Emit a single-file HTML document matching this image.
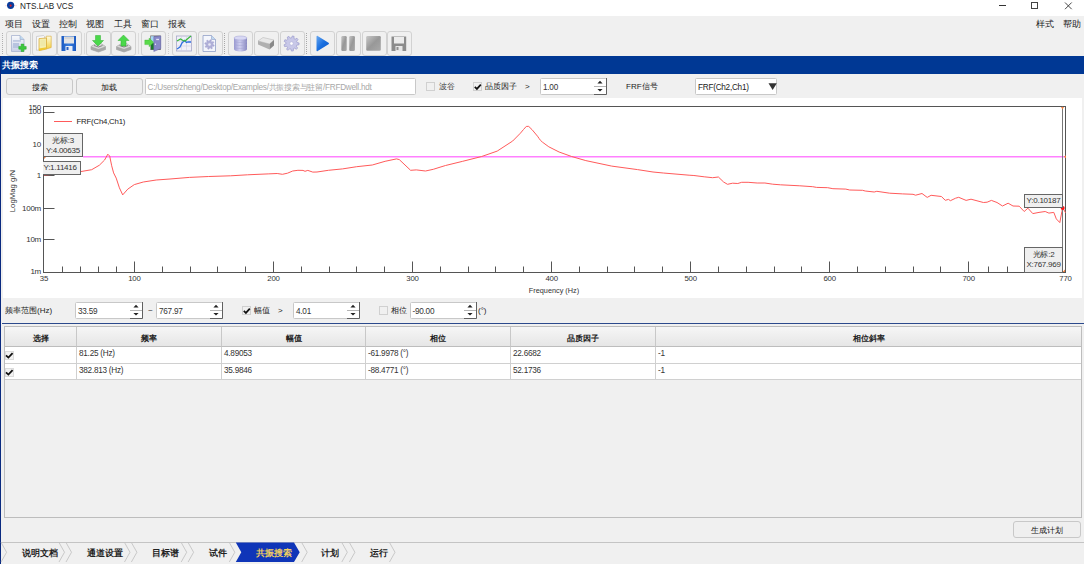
<!DOCTYPE html>
<html><head><meta charset="utf-8">
<style>
*{margin:0;padding:0;box-sizing:border-box}
html,body{width:1084px;height:564px;overflow:hidden;background:#f0f0f0;font-family:"Liberation Sans",sans-serif;color:#222}
.a{position:absolute}
#title{left:0;top:0;width:1084px;height:16px;background:#fff}
.menu{position:absolute;top:18px;font-size:8.5px;line-height:12px;color:#222}
.tb{position:absolute;top:31px;width:25px;height:25px;border:1px solid #d2d2d2;border-radius:3px;background:#f0f0f0}
.tb svg{position:absolute;left:-1px;top:-1px}
.tsep{position:absolute;top:33px;width:1px;height:21px;border-left:1px dotted #b8b8b8}
#bluebar{left:0;top:56px;width:1084px;height:17.5px;background:#003894;color:#fff;font-size:9px;font-weight:bold;line-height:19px;padding-left:1.5px}
#lborder{left:0;top:56px;width:1.2px;height:508px;background:#0a2a80}
.btn{position:absolute;height:16.5px;border:1px solid #c8c8c8;border-radius:3px;background:#efefef;font-size:8px;line-height:14px;padding-top:1.5px;text-align:center;color:#111}
.inp{position:absolute;height:16.5px;border:1px solid #c8c8c8;border-radius:1.5px;background:#fff;font-size:8.2px;letter-spacing:-0.25px;line-height:17px;padding-left:2px;color:#333;white-space:nowrap}
.chk{position:absolute;width:9px;height:9px;border:1px solid #d0d0d0;background:#f0f0f0}
.lbl{position:absolute;font-size:8px;line-height:12px;color:#222;white-space:nowrap}
.spin{position:absolute;right:0;top:0;width:12px;height:100%}
#chart{left:3px;top:98px;width:1079px;height:200px;background:#fff}
.xl{position:absolute;top:274px;width:40px;text-align:center;font-size:7.8px;letter-spacing:-0.2px;line-height:10px;color:#333}
.yl{position:absolute;left:0;width:41px;text-align:right;font-size:8px;letter-spacing:-0.25px;line-height:12px;color:#333}
.cbox{position:absolute;background:#efefef;border:1px solid #666;font-size:8px;letter-spacing:-0.25px;line-height:10px;text-align:center;color:#333;white-space:nowrap}
#table{left:4px;top:326px;width:1078px;height:192px;border:1px solid #bdbdbd;background:#f0f0f0}
.th{position:absolute;top:0;height:20px;background:linear-gradient(#f6f6f6,#e6e6e6);border-right:1px solid #c8c8c8;border-bottom:1px solid #bdbdbd;font-size:8.4px;font-weight:bold;line-height:22px;text-align:center;color:#222}
.td{position:absolute;height:17px;background:#fff;border-right:1px solid #d0d0d0;border-bottom:1px solid #d0d0d0;font-size:8.2px;letter-spacing:-0.25px;line-height:13px;padding-left:2px;color:#333;white-space:nowrap}
.tab{position:absolute;top:543.5px;height:19px;font-size:8.55px;font-weight:bold;line-height:19px;color:#222;white-space:nowrap}
</style></head><body>
<div id="title" class="a"></div>

<svg class="a" style="left:0;top:0" width="20" height="12"><line x1="5" y1="5.7" x2="17" y2="5.7" stroke="#ff8080" stroke-opacity=".25" stroke-width="1"/><circle cx="10.6" cy="5.3" r="3.6" fill="#0a3c9c"/><circle cx="10.6" cy="5.6" r="1.1" fill="#e02020"/></svg>
<div class="a" style="left:20px;top:1.8px;font-size:8.2px;line-height:10px;color:#222">NTS.LAB VCS</div>
<div class="a" style="left:999px;top:5px;width:7px;height:1px;background:#333"></div>
<div class="a" style="left:1031px;top:2px;width:7px;height:7px;border:1px solid #444"></div>
<svg class="a" style="left:1064px;top:2px" width="9" height="8"><path d="M1 0.5L7.7 7.2M7.7 0.5L1 7.2" stroke="#333" stroke-width="0.9"/></svg>

<div class="menu" style="left:5px">项目</div>
<div class="menu" style="left:32px">设置</div>
<div class="menu" style="left:59px">控制</div>
<div class="menu" style="left:86px">视图</div>
<div class="menu" style="left:114px">工具</div>
<div class="menu" style="left:141px">窗口</div>
<div class="menu" style="left:168px">报表</div>
<div class="menu" style="left:1036px">样式</div>
<div class="menu" style="left:1063px">帮助</div>

<div class="a" style="left:2px;top:33px;width:1px;height:21px;border-left:1px dotted #b0b0b0"></div>
<div class="tb" style="left:6px"><svg width="25" height="25"><defs><linearGradient id="gpg" x1="0" y1="0" x2="0" y2="1"><stop offset="0" stop-color="#f8f9fc"/><stop offset="1" stop-color="#c8d0e8"/></linearGradient></defs>
 <path d="M5.5 4.5h8.5l4 4v12h-12.5z" fill="url(#gpg)" stroke="#a8b4d0" stroke-width=".8"/><path d="M14 4.5v4h4" fill="#bcd8f0" stroke="#98a8c8" stroke-width=".6"/>
 <rect x="7" y="9.5" width="8" height=".9" fill="#98a8d0"/><rect x="7" y="12" width="6" height="5" fill="#b8c4e0"/>
 <path d="M15.15 13.100000000000001h2.7v2.35h2.35v2.7h-2.35v2.35h-2.7v-2.35h-2.35v-2.7h2.35z" fill="#3cc83c" stroke="#28a028" stroke-width=".5"/></svg></div>
<div class="tb" style="left:32px"><svg width="25" height="25"><defs><linearGradient id="gfo" x1="0" y1="0" x2="0" y2="1"><stop offset="0" stop-color="#fffce0"/><stop offset="1" stop-color="#f4d040"/></linearGradient></defs>
 <path d="M4.5 5.5l7-1 1 1v13l-8 .8z" fill="#f8f8f8" stroke="#b8b8c0" stroke-width=".6"/>
 <path d="M14.2 5.2h5v11.3l-5 1.5z" fill="url(#gfo)" stroke="#d8a830" stroke-width=".6"/>
 <path d="M7 7.6l7.5-.6v11l-7.5 1.6z" fill="#f4eeb0" stroke="#d8a830" stroke-width=".7"/><path d="M8.5 10h5M8.5 12h5M8.5 14h5" stroke="#e0d890" stroke-width=".5"/><path d="M7 17.5l7.5-1.2v1.8l-7.5 1.6z" fill="#f0c830"/></svg></div>
<div class="tb" style="left:57px"><svg width="25" height="25"><defs><linearGradient id="gfl" x1="0" y1="0" x2="1" y2="0"><stop offset="0" stop-color="#1a58c0"/><stop offset=".5" stop-color="#3a80e0"/><stop offset="1" stop-color="#1a58c0"/></linearGradient></defs>
 <path d="M4.5 5h14.5v15h-14.5z" rx="1" fill="url(#gfl)"/><rect x="7" y="5.5" width="10" height="7" fill="#e4e4e4"/><rect x="7.5" y="6.5" width="9" height="1" fill="#c8c8c8"/>
 <rect x="8.5" y="15" width="7" height="5" fill="#e8eef8"/><rect x="9.5" y="16" width="2" height="3" fill="#2a60c0"/></svg></div>
<div class="tb" style="left:86px"><svg width="25" height="25"><path d="M5 15.5l5-3h5l4.5 3v3l-7 2.5-7.5-2.5z" fill="#d8d8d8" stroke="#a0a0a0" stroke-width=".6"/><path d="M5 15.5l7.5 2.5 7-2.5v3l-7 2.5-7.5-2.5z" fill="#a8a8a8"/><path d="M8 14.5l4.5 1.5 4-1.5" fill="none" stroke="#707070" stroke-width=".8"/>
 <path d="M9.5 4.5h5v5h3l-5.5 5.5-5.5-5.5h3z" fill="#4ad84a" stroke="#30b030" stroke-width=".5"/></svg></div>
<div class="tb" style="left:111px"><svg width="25" height="25"><path d="M5.5 15.5l5-3h5l4.5 3v3l-7 2.5-7.5-2.5z" fill="#d8d8d8" stroke="#a0a0a0" stroke-width=".6"/><path d="M5.5 15.5l7.5 2.5 7-2.5v3l-7 2.5-7.5-2.5z" fill="#a8a8a8"/><path d="M8.5 14.5l4.5 1.5 4-1.5" fill="none" stroke="#707070" stroke-width=".8"/>
 <path d="M12.5 4l5.5 5.5h-3v5.5h-5v-5.5h-3z" fill="#4ad84a" stroke="#30b030" stroke-width=".5"/></svg></div>
<div class="tb" style="left:141px"><svg width="25" height="25"><rect x="9.3" y="4.5" width="10.5" height="14.5" fill="#707070"/><rect x="10" y="5.2" width="3" height="7" fill="#a8d8f4"/><rect x="10" y="12.2" width="3" height="6.3" fill="#1a7a2a"/>
 <path d="M12.8 5.6L19.8 4.9V17.6L12.8 20.5z" fill="#8888c8" stroke="#6868a8" stroke-width=".5"/><rect x="15.2" y="7.8" width="2.8" height="1.3" fill="#e0e0f4"/><circle cx="14.4" cy="13.2" r=".7" fill="#e8e8f8"/>
 <path d="M3.8 9.1h4.3v-2l4.5 4.2-4.5 4.4v-2.1h-4.3z" fill="#5ada4a" stroke="#40b838" stroke-width=".4"/></svg></div>
<div class="tb" style="left:172px"><svg width="25" height="25"><rect x="4.5" y="5" width="15" height="15" fill="#f0f0f8" stroke="#a8a8c8" stroke-width=".8"/><path d="M4.5 10h15M4.5 15h15M9.5 5v15M14.5 5v15" stroke="#d0d0e0" stroke-width=".6"/>
 <path d="M5 18l3-2 2-4 2.5-2.5 2 2 1.5-.5h3" fill="none" stroke="#3070e0" stroke-width="1.3"/><path d="M5 10l3.5-2 2.5 1.5 2 .5 3.5-3 2.5-2" fill="none" stroke="#38b838" stroke-width="1.2"/></svg></div>
<div class="tb" style="left:198px"><svg width="25" height="25"><path d="M5 4.5h8.5l4 4v12h-12.5z" fill="#f4f6fc" stroke="#90a0c8" stroke-width=".8"/><path d="M13.5 4.5v4h4" fill="#c0d8f0" stroke="#90a0c8" stroke-width=".6"/>
 <path d="M11.50,10.10 L12.06,8.73 L13.34,9.07 L13.16,10.53 L13.90,11.10 L15.27,10.53 L15.93,11.66 L14.77,12.58 L14.90,13.50 L16.27,14.06 L15.93,15.34 L14.47,15.16 L13.90,15.90 L14.47,17.27 L13.34,17.93 L12.42,16.77 L11.50,16.90 L10.94,18.27 L9.66,17.93 L9.84,16.47 L9.10,15.90 L7.73,16.47 L7.07,15.34 L8.23,14.42 L8.10,13.50 L6.73,12.94 L7.07,11.66 L8.53,11.84 L9.10,11.10 L8.53,9.73 L9.66,9.07 L10.58,10.23z" fill="#b0b0d8" stroke="#9898c8" stroke-width=".4"/><circle cx="11.5" cy="13.5" r="1.3" fill="#e8e8f4"/></svg></div>
<div class="tb" style="left:228px"><svg width="25" height="25"><defs><linearGradient id="gdb" x1="0" y1="0" x2="1" y2="0"><stop offset="0" stop-color="#9898d0"/><stop offset=".45" stop-color="#d0d0f0"/><stop offset="1" stop-color="#8888c0"/></linearGradient></defs>
 <path d="M6 7v11c0 1.5 2.8 2.5 6.5 2.5s6.5-1 6.5-2.5V7z" fill="url(#gdb)"/><ellipse cx="12.5" cy="7" rx="6.5" ry="2" fill="#d8d8f4" stroke="#a0a0d0" stroke-width=".5"/>
 <path d="M6 10.5c1 1.2 12 1.2 13 0M6 13.5c1 1.2 12 1.2 13 0M6 16.5c1 1.2 12 1.2 13 0" fill="none" stroke="#a0a0d0" stroke-width=".5"/></svg></div>
<div class="tb" style="left:254px"><svg width="25" height="25"><path d="M4 10l5-3.5 11 2.5-4.5 4z" fill="#e8e8e8" stroke="#b0b0b0" stroke-width=".5"/><path d="M4 10v3.5l11.5 5v-5.5z" fill="#b0b0b0"/><path d="M15.5 13v5.5l4.5-4v-5.5z" fill="#888"/></svg></div>
<div class="tb" style="left:280px"><svg width="25" height="25"><path d="M11.50,6.90 L12.29,4.94 L14.10,5.36 L13.95,7.47 L15.10,8.21 L16.97,7.22 L18.08,8.70 L16.62,10.22 L17.01,11.53 L19.08,11.97 L18.98,13.82 L16.88,14.04 L16.35,15.30 L17.65,16.97 L16.39,18.32 L14.63,17.14 L13.42,17.76 L13.34,19.87 L11.50,20.10 L10.91,18.07 L9.58,17.76 L8.17,19.33 L6.61,18.32 L7.47,16.39 L6.65,15.30 L4.56,15.59 L4.02,13.82 L5.91,12.89 L5.99,11.53 L4.19,10.41 L4.92,8.70 L6.97,9.21 L7.90,8.21 L7.25,6.20 L8.90,5.36 L10.15,7.07z" fill="#c8c8e8" stroke="#9090c8" stroke-width=".6" stroke-linejoin="round"/><circle cx="11.5" cy="12.5" r="1.7" fill="#fff" stroke="#a0a0d0" stroke-width=".4"/></svg></div>
<div class="tb" style="left:310px"><svg width="25" height="25"><defs><linearGradient id="gpl" x1="0" y1="0" x2="1" y2="1"><stop offset="0" stop-color="#6aa8f0"/><stop offset=".5" stop-color="#1a70e0"/><stop offset="1" stop-color="#1058c8"/></linearGradient></defs><path d="M6.5 5.5c0-.8.6-1 1.2-.6l10.8 6.8c.6.4.6 1.2 0 1.6L7.7 20.1c-.6.4-1.2.2-1.2-.6z" fill="url(#gpl)"/></svg></div>
<div class="tb" style="left:336px"><svg width="25" height="25"><defs><linearGradient id="ggr" x1="0" y1="0" x2="1" y2="1"><stop offset="0" stop-color="#c8c8c8"/><stop offset=".5" stop-color="#989898"/><stop offset="1" stop-color="#a8a8a8"/></linearGradient></defs><rect x="5.3" y="5" width="5.4" height="15" rx="1.2" fill="url(#ggr)"/><rect x="13.2" y="5" width="5.7" height="15" rx="1.2" fill="url(#ggr)"/></svg></div>
<div class="tb" style="left:362px"><svg width="25" height="25"><rect x="4.2" y="5" width="14.6" height="14.8" rx="1.2" fill="url(#ggr)"/></svg></div>
<div class="tb" style="left:387px"><svg width="25" height="25"><path d="M4.5 5.5h14.7v14.5h-14.7z" fill="#8c8c8c"/><rect x="7" y="6" width="10" height="6.5" fill="#ececec"/><rect x="8.5" y="15" width="7" height="5" fill="#e8e8e8"/><rect x="9.5" y="16" width="2" height="3" fill="#909090"/></svg></div>
<div class="tsep" style="left:83.5px;border-left:1px solid #dcdcdc"></div>
<div class="tsep" style="left:138px;border-left:1px solid #dcdcdc"></div>
<div class="tsep" style="left:167.5px;border-left:1px dotted #d0d0d0"></div>
<div class="tsep" style="left:224px;border-left:1px dotted #a8a8a8"></div>
<div class="tsep" style="left:306px;border-left:1px dotted #a8a8a8"></div>

<div id="bluebar" class="a">共振搜索</div>
<div id="lborder" class="a"></div>

<div class="btn" style="left:6px;top:78px;width:67px">搜索</div>
<div class="btn" style="left:75.5px;top:78px;width:67px">加载</div>
<div class="inp" style="left:144.5px;top:78px;width:271px;color:#a8a8a8">C:/Users/zheng/Desktop/Examples/共振搜索与驻留/FRFDwell.hdt</div>
<div class="chk" style="left:426px;top:82px"></div>
<div class="lbl" style="left:438.5px;top:81px;color:#444">波谷</div>
<div class="chk" style="left:473px;top:82px"></div>
<svg class="a" style="left:473px;top:82px" width="10" height="10"><path d="M1.8 4.8L3.9 6.9L7.8 2.6" fill="none" stroke="#111" stroke-width="1.7"/></svg>
<div class="lbl" style="left:485px;top:81px">品质因子</div>
<div class="lbl" style="left:525px;top:81px">&gt;</div>
<div class="inp" style="left:540px;top:78px;width:67px">1.00<svg class="a" style="right:-1px;top:-1px" width="14" height="17"><path d="M1 8.5H13" stroke="#b4b4b4"/><path d="M7 2.8L9.6 5.4H4.4z M7 13.6L9.6 11H4.4z" fill="#222"/><path d="M1 16.5H13.5M13.5 0V16.5" stroke="#606060"/></svg></div>
<div class="lbl" style="left:626px;top:81px">FRF信号</div>
<div class="inp" style="left:695px;top:78px;width:82px;color:#222">FRF(Ch2,Ch1)</div>
<svg class="a" style="left:767.5px;top:83.3px" width="10" height="8"><path d="M0.5 0.3H8.8L4.65 7z" fill="#333"/></svg>

<div id="chart" class="a"></div>
<svg class="a" style="left:0;top:0" width="1084" height="300">
<rect x="43.5" y="106.5" width="1022" height="166" fill="none" stroke="#555" stroke-width="1"/>
<g stroke="#555" stroke-width="1"><line x1="134.5" y1="261.5" x2="134.5" y2="272.5"/>
<line x1="273.5" y1="261.5" x2="273.5" y2="272.5"/>
<line x1="412.5" y1="261.5" x2="412.5" y2="272.5"/>
<line x1="551.5" y1="261.5" x2="551.5" y2="272.5"/>
<line x1="690.5" y1="261.5" x2="690.5" y2="272.5"/>
<line x1="829.5" y1="261.5" x2="829.5" y2="272.5"/>
<line x1="968.5" y1="261.5" x2="968.5" y2="272.5"/>
<line x1="62.5" y1="266.5" x2="62.5" y2="272.5"/>
<line x1="80.5" y1="266.5" x2="80.5" y2="272.5"/>
<line x1="98.5" y1="266.5" x2="98.5" y2="272.5"/>
<line x1="116.5" y1="266.5" x2="116.5" y2="272.5"/>
<line x1="162.5" y1="266.5" x2="162.5" y2="272.5"/>
<line x1="190.5" y1="266.5" x2="190.5" y2="272.5"/>
<line x1="217.5" y1="266.5" x2="217.5" y2="272.5"/>
<line x1="245.5" y1="266.5" x2="245.5" y2="272.5"/>
<line x1="301.5" y1="266.5" x2="301.5" y2="272.5"/>
<line x1="329.5" y1="266.5" x2="329.5" y2="272.5"/>
<line x1="356.5" y1="266.5" x2="356.5" y2="272.5"/>
<line x1="384.5" y1="266.5" x2="384.5" y2="272.5"/>
<line x1="440.5" y1="266.5" x2="440.5" y2="272.5"/>
<line x1="468.5" y1="266.5" x2="468.5" y2="272.5"/>
<line x1="495.5" y1="266.5" x2="495.5" y2="272.5"/>
<line x1="523.5" y1="266.5" x2="523.5" y2="272.5"/>
<line x1="579.5" y1="266.5" x2="579.5" y2="272.5"/>
<line x1="607.5" y1="266.5" x2="607.5" y2="272.5"/>
<line x1="634.5" y1="266.5" x2="634.5" y2="272.5"/>
<line x1="662.5" y1="266.5" x2="662.5" y2="272.5"/>
<line x1="718.5" y1="266.5" x2="718.5" y2="272.5"/>
<line x1="746.5" y1="266.5" x2="746.5" y2="272.5"/>
<line x1="774.5" y1="266.5" x2="774.5" y2="272.5"/>
<line x1="801.5" y1="266.5" x2="801.5" y2="272.5"/>
<line x1="857.5" y1="266.5" x2="857.5" y2="272.5"/>
<line x1="885.5" y1="266.5" x2="885.5" y2="272.5"/>
<line x1="913.5" y1="266.5" x2="913.5" y2="272.5"/>
<line x1="940.5" y1="266.5" x2="940.5" y2="272.5"/>
<line x1="988.5" y1="266.5" x2="988.5" y2="272.5"/>
<line x1="1007.5" y1="266.5" x2="1007.5" y2="272.5"/>
<line x1="1027.5" y1="266.5" x2="1027.5" y2="272.5"/>
<line x1="1046.5" y1="266.5" x2="1046.5" y2="272.5"/>
<line x1="43.5" y1="112.5" x2="54.5" y2="112.5"/>
<line x1="43.5" y1="144.5" x2="54.5" y2="144.5"/>
<line x1="43.5" y1="175.5" x2="54.5" y2="175.5"/>
<line x1="43.5" y1="208.5" x2="54.5" y2="208.5"/>
<line x1="43.5" y1="239.5" x2="54.5" y2="239.5"/></g>
<line x1="83" y1="156.7" x2="1065" y2="156.7" stroke="#ff80ff" stroke-width="1.5"/>
<path d="M44.0,175.0 L60.0,174.0 L72.0,173.0 L80.7,171.6 L91.7,169.7 L99.4,165.2 L104.6,160.0 L107.8,154.2 L109.7,156.1 L111.7,165.8 L113.6,172.9 L116.2,178.1 L119.4,187.8 L122.7,194.9 L127.8,189.1 L134.3,184.6 L143.3,182.0 L156.2,180.0 L170.0,179.0 L189.4,177.4 L208.7,176.5 L230.7,175.8 L247.5,174.8 L268.2,173.9 L277.2,173.5 L282.4,174.3 L287.5,173.2 L292.7,171.0 L297.9,170.3 L303.0,170.4 L305.0,171.3 L307.8,170.4 L312.8,172.1 L317.0,172.0 L328.4,170.3 L342.6,168.9 L356.7,166.7 L372.3,165.0 L385.1,161.3 L396.5,158.9 L399.3,159.6 L410.6,170.3 L416.3,169.9 L425.5,171.0 L433.3,169.3 L440.0,167.2 L445.5,165.5 L462.3,161.4 L481.7,156.5 L497.2,151.1 L512.7,141.0 L520.4,133.2 L523.5,129.5 L526.3,126.4 L528.7,126.4 L532.0,129.6 L537.5,136.2 L539.2,138.6 L540.5,140.4 L542.5,142.2 L548.8,146.8 L559.1,152.0 L571.6,156.5 L585.8,160.6 L611.7,166.1 L637.5,169.6 L653.0,172.0 L663.3,173.0 L689.1,175.2 L693.9,175.5 L704.2,176.8 L712.6,177.7 L718.4,177.0 L723.6,182.0 L727.5,184.3 L732.6,183.2 L737.8,183.5 L741.7,182.3 L748.1,182.3 L757.2,183.0 L764.9,183.0 L772.7,184.2 L780.4,184.8 L799.8,185.8 L812.7,186.7 L816.6,187.4 L827.7,187.7 L832.9,188.7 L845.8,189.1 L849.7,190.0 L862.6,190.3 L865.2,191.0 L874.2,192.0 L876.8,191.3 L889.7,193.2 L902.7,193.9 L913.0,194.3 L915.6,195.2 L922.0,193.5 L927.2,197.4 L931.1,195.3 L941.4,196.5 L945.3,200.3 L948.5,199.4 L950.4,200.7 L955.6,198.2 L958.7,197.3 L966.1,200.4 L971.0,199.2 L983.4,202.5 L987.1,202.2 L991.4,200.4 L997.0,202.5 L1002.5,206.0 L1008.1,203.2 L1013.0,206.0 L1019.2,206.2 L1024.2,211.5 L1027.9,208.2 L1032.8,213.6 L1039.0,212.4 L1045.2,211.5 L1048.9,213.1 L1053.8,212.4 L1056.3,218.9 L1059.8,222.6 L1061.9,211.5 L1062.7,207.8 L1065.6,212.8" fill="none" stroke="#ff5a5a" stroke-width="1"/>
<line x1="54" y1="121.5" x2="72" y2="121.5" stroke="#ff5a5a" stroke-width="1"/>
<line x1="1062.5" y1="106.5" x2="1062.5" y2="272.5" stroke="#777" stroke-width="1"/>
<circle cx="1062.7" cy="208" r="2" fill="#ff1010"/>
<path d="M1061,107 L1064,107 L1062.5,109.5z M1066,155.2 L1066,158.2 L1063.8,156.7z M1062.5,272 L1065,272 L1065,269.5z M44,157 L46,157 L44,159z" fill="#f08040"/>
</svg>
<div class="lbl" style="left:76.5px;top:116px;font-size:7.8px;letter-spacing:-0.2px">FRF(Ch4,Ch1)</div>
<div class="xl" style="left:24.0px">35</div>
<div class="xl" style="left:114.4px">100</div>
<div class="xl" style="left:253.5px">200</div>
<div class="xl" style="left:392.5px">300</div>
<div class="xl" style="left:531.6px">400</div>
<div class="xl" style="left:670.6px">500</div>
<div class="xl" style="left:809.6px">600</div>
<div class="xl" style="left:948.7px">700</div>
<div class="xl" style="left:1045.5px">770</div>
<div class="yl" style="top:101.5px">150</div>
<div class="yl" style="top:105.5px">100</div>
<div class="yl" style="top:138.5px">10</div>
<div class="yl" style="top:169.5px">1</div>
<div class="yl" style="top:202.5px">100m</div>
<div class="yl" style="top:234.0px">10m</div>
<div class="yl" style="top:265.5px">1m</div>
<div class="a" style="top:185.5px;font-size:7.8px;line-height:10px;color:#333;transform:rotate(-90deg);transform-origin:center;width:50px;text-align:center;left:-12.5px">LogMag g/N</div>
<div class="a" style="left:504px;top:285.5px;width:100px;text-align:center;font-size:7.3px;line-height:10px;color:#333">Frequency (Hz)</div>
<div class="cbox" style="left:43px;top:133px;width:40px;height:24px;padding-top:1.5px">光标:3<br>Y:4.00635</div>
<div class="cbox" style="left:43px;top:161px;width:38px;height:14px;line-height:12px;border-left:none;text-align:left;padding-left:0.5px">Y:1.11416</div>
<div class="cbox" style="left:1024px;top:194px;width:39px;height:14px;line-height:12px">Y:0.10187</div>
<div class="cbox" style="left:1024px;top:247px;width:39px;height:25.5px;padding-top:2px">光标:2<br>X:767.969</div>

<div class="lbl" style="left:5px;top:305px">频率范围(Hz)</div>
<div class="inp" style="left:75px;top:302px;width:68px">33.59<svg class="a" style="right:-1px;top:-1px" width="14" height="17"><path d="M1 8.5H13" stroke="#b4b4b4"/><path d="M7 2.8L9.6 5.4H4.4z M7 13.6L9.6 11H4.4z" fill="#222"/><path d="M1 16.5H13.5M13.5 0V16.5" stroke="#606060"/></svg></div>
<div class="lbl" style="left:148px;top:305px">~</div>
<div class="inp" style="left:156px;top:302px;width:67px">767.97<svg class="a" style="right:-1px;top:-1px" width="14" height="17"><path d="M1 8.5H13" stroke="#b4b4b4"/><path d="M7 2.8L9.6 5.4H4.4z M7 13.6L9.6 11H4.4z" fill="#222"/><path d="M1 16.5H13.5M13.5 0V16.5" stroke="#606060"/></svg></div>
<div class="chk" style="left:242px;top:305.5px"></div>
<svg class="a" style="left:242px;top:305.5px" width="10" height="10"><path d="M1.8 4.8L3.9 6.9L7.8 2.6" fill="none" stroke="#111" stroke-width="1.7"/></svg>
<div class="lbl" style="left:254px;top:305px">幅值</div>
<div class="lbl" style="left:278px;top:305px">&gt;</div>
<div class="inp" style="left:293px;top:302px;width:67px">4.01<svg class="a" style="right:-1px;top:-1px" width="14" height="17"><path d="M1 8.5H13" stroke="#b4b4b4"/><path d="M7 2.8L9.6 5.4H4.4z M7 13.6L9.6 11H4.4z" fill="#222"/><path d="M1 16.5H13.5M13.5 0V16.5" stroke="#606060"/></svg></div>
<div class="chk" style="left:379px;top:305.5px"></div>
<div class="lbl" style="left:391px;top:305px">相位</div>
<div class="inp" style="left:409.5px;top:302px;width:67px">-90.00<svg class="a" style="right:-1px;top:-1px" width="14" height="17"><path d="M1 8.5H13" stroke="#b4b4b4"/><path d="M7 2.8L9.6 5.4H4.4z M7 13.6L9.6 11H4.4z" fill="#222"/><path d="M1 16.5H13.5M13.5 0V16.5" stroke="#606060"/></svg></div>
<div class="lbl" style="left:478px;top:305px">(°)</div>
<div class="a" style="left:2px;top:322.5px;width:1082px;height:1.2px;background:#2c4a8c"></div>

<div id="table" class="a">
<div class="th" style="left:0;width:72px">选择</div>
<div class="th" style="left:72px;width:145px">频率</div>
<div class="th" style="left:217px;width:144px">幅值</div>
<div class="th" style="left:361px;width:145px">相位</div>
<div class="th" style="left:506px;width:145px">品质因子</div>
<div class="th" style="left:651px;width:425px;border-right:none">相位斜率</div>
<div class="td" style="left:0;top:20px;width:72px;height:16.5px"></div>
<div class="td" style="left:72px;top:20px;width:145px;height:16.5px">81.25 (Hz)</div>
<div class="td" style="left:217px;top:20px;width:144px;height:16.5px">4.89053</div>
<div class="td" style="left:361px;top:20px;width:145px;height:16.5px">-61.9978 (°)</div>
<div class="td" style="left:506px;top:20px;width:145px;height:16.5px">22.6682</div>
<div class="td" style="left:651px;top:20px;width:425px;height:16.5px;border-right:none">-1</div>
<div class="td" style="left:0;top:36.5px;width:72px;height:16.5px"></div>
<div class="td" style="left:72px;top:36.5px;width:145px;height:16.5px">382.813 (Hz)</div>
<div class="td" style="left:217px;top:36.5px;width:144px;height:16.5px">35.9846</div>
<div class="td" style="left:361px;top:36.5px;width:145px;height:16.5px">-88.4771 (°)</div>
<div class="td" style="left:506px;top:36.5px;width:145px;height:16.5px">52.1736</div>
<div class="td" style="left:651px;top:36.5px;width:425px;height:16.5px;border-right:none">-1</div>
<svg class="a" style="left:0;top:24px" width="10" height="10"><rect x="0.5" y="0.5" width="8" height="8" fill="#f2f2f2" stroke="#dcdcdc"/><path d="M1 4.3L3.4 6.6L7.6 2.2" fill="none" stroke="#111" stroke-width="1.8"/></svg>
<svg class="a" style="left:0;top:40.5px" width="10" height="10"><rect x="0.5" y="0.5" width="8" height="8" fill="#f2f2f2" stroke="#dcdcdc"/><path d="M1 4.3L3.4 6.6L7.6 2.2" fill="none" stroke="#111" stroke-width="1.8"/></svg>
</div>


<div class="btn" style="left:1013px;top:521px;width:67.5px">生成计划</div>
<div class="a" style="left:1px;top:542px;width:1083px;height:1px;background:#c4c4c4"></div>

<svg class="a" style="left:0;top:542.3px" width="400" height="22"><g fill="none" stroke="#c4c4c4" stroke-width="0.9"><polyline points="59,0.5 64.5,10.25 59,20" /><polyline points="124.5,0.5 130.0,10.25 124.5,20" /><polyline points="181.2,0.5 186.7,10.25 181.2,20" /><polyline points="229.3,0.5 234.8,10.25 229.3,20" /><polyline points="341.8,0.5 347.3,10.25 341.8,20" /><polyline points="389.5,0.5 395.0,10.25 389.5,20" /><polyline points="1.1,0.5 6.6,10.25 1.1,20" /><polyline points="66,0.5 71.5,10.25 66,20" /><polyline points="131.4,0.5 136.9,10.25 131.4,20" /><polyline points="188.1,0.5 193.6,10.25 188.1,20" /><polyline points="301.7,0.5 307.2,10.25 301.7,20" /><polyline points="349.4,0.5 354.9,10.25 349.4,20" /></g><path d="M235.8,0.5 L294,0.5 L299.7,10.25 L294,20 L235.8,20 L241.3,10.25z" fill="#0f35b8"/></svg>
<div class="tab" style="left:-1.8px;width:60px;text-align:right;">说明文档</div>
<div class="tab" style="left:62.6px;width:60px;text-align:right;">通道设置</div>
<div class="tab" style="left:118.8px;width:60px;text-align:right;">目标谱</div>
<div class="tab" style="left:167px;width:60px;text-align:right;">试件</div>
<div class="tab" style="left:232px;width:60px;text-align:right;color:#f4d060;">共振搜索</div>
<div class="tab" style="left:279.4px;width:60px;text-align:right;">计划</div>
<div class="tab" style="left:327.8px;width:60px;text-align:right;">运行</div>
</body></html>
